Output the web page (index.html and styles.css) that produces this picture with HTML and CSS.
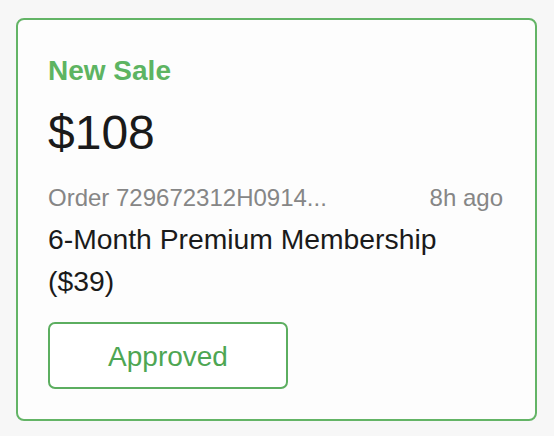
FILE: index.html
```html
<!DOCTYPE html>
<html>
<head>
<meta charset="utf-8">
<link rel="stylesheet" href="styles.css">
</head>
<body>
<div class="card">
  <div class="title">New Sale</div>
  <div class="amount">$108</div>
  <div class="meta">
    <span class="order">Order 729672312H0914...</span>
    <span class="time">8h ago</span>
  </div>
  <div class="product">6-Month Premium Membership ($39)</div>
  <button class="status">Approved</button>
</div>
</body>
</html>
```
FILE: styles.css
```css
html, body {
  margin: 0;
  padding: 0;
  background: #f7f7f7;
  font-family: "Liberation Sans", Arial, sans-serif;
}
body {
  padding: 18px 17px 0 16px;
}
.card {
  box-sizing: border-box;
  width: 521px;
  height: 403px;
  border: 2px solid #63b466;
  border-radius: 8px;
  background: #fdfdfd;
  padding: 35px 32px 30px 30px;
  display: flex;
  flex-direction: column;
}
.title {
  color: #5db462;
  font-weight: bold;
  font-size: 28px;
  line-height: 32px;
}
.amount {
  color: #1a1a1a;
  font-size: 48px;
  line-height: 52px;
  margin-top: 20px;
}
.meta {
  display: flex;
  justify-content: space-between;
  gap: 20px;
  color: #868686;
  font-size: 24px;
  line-height: 28px;
  margin-top: 25px;
}
.order,
.time {
  white-space: nowrap;
}
.product {
  color: #1a1a1a;
  font-size: 28.3px;
  line-height: 42px;
  margin-top: 6px;
}
.status {
  align-self: flex-start;
  width: 240px;
  height: 67px;
  margin-top: 20px;
  border: 2px solid #5cae60;
  border-radius: 7px;
  background: #ffffff;
  color: #4ea653;
  font-family: "Liberation Sans", Arial, sans-serif;
  font-size: 28px;
  padding: 3px 0 0;
}
```
